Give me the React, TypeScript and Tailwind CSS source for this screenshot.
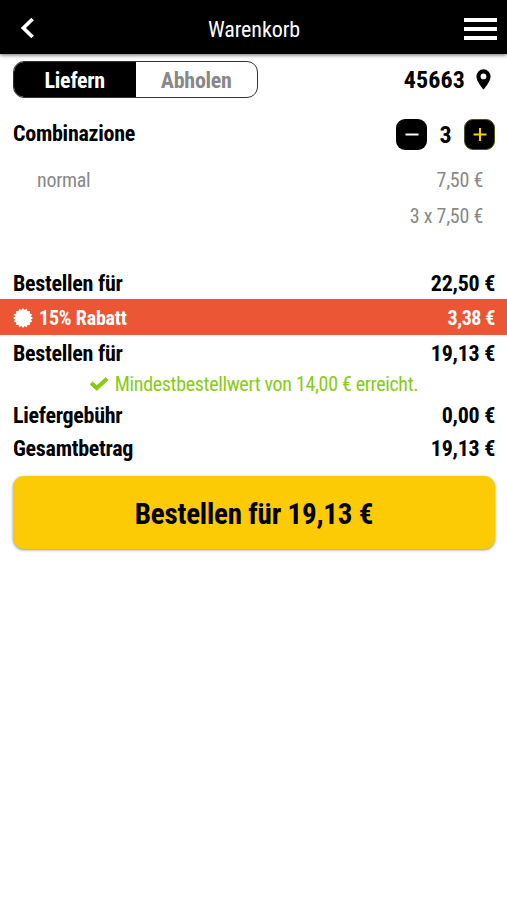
type RowProps = { label: string; price: string; className: string };

const BURST_SPIKES = 16;

// alternates between the outer and inner radius to get the spikes
const burstPoints = Array.from({ length: BURST_SPIKES * 2 }, (_, i) => {
  const radius = i % 2 === 0 ? 10 : 8.1;
  const angle = (Math.PI * i) / BURST_SPIKES;
  const x = 10 + radius * Math.sin(angle);
  const y = 10 - radius * Math.cos(angle);
  return `${x.toFixed(2)},${y.toFixed(2)}`;
}).join(" ");

function BurstIcon() {
  return (
    <svg width="20" height="20" viewBox="0 0 20 20" fill="currentColor">
      <polygon points={burstPoints} />
    </svg>
  );
}

function CheckIcon() {
  return (
    <svg width="20" height="16" viewBox="0 0 20 16" fill="currentColor">
      <path
        d="M1 8.4 3.6 6l4.1 3.6L16.8 1.5l2.4 2.4L7.8 14.4z"
        stroke="currentColor"
        strokeWidth="0.8"
        strokeLinejoin="round"
      />
    </svg>
  );
}

function PinIcon() {
  return (
    <svg width="15" height="21" viewBox="0 0 15 21" fill="currentColor">
      <path
        fillRule="evenodd"
        d="M7.5 0.3A7.1 7.1 0 0 0 .4 7.4c0 5 7.1 13.2 7.1 13.2s7.1-8.2 7.1-13.2A7.1 7.1 0 0 0 7.5.3zm0 4.2a2.9 2.9 0 1 1 0 5.8 2.9 2.9 0 0 1 0-5.8z"
      />
    </svg>
  );
}

function SummaryRow({ label, price, className }: RowProps) {
  return (
    <div
      className={`flex items-center justify-between pl-[13px] pr-3 text-[22px] font-bold ${className}`}
    >
      <span>{label}</span>
      <span>{price}</span>
    </div>
  );
}

function Header() {
  return (
    <header className="flex h-[54px] items-center justify-between bg-black pl-5 pr-[10px] pt-[3px] text-white shadow-[0_1px_4px_rgba(0,0,0,0.6)]">
      <button className="w-6 pb-px" aria-label="Zurück">
        <svg width="15" height="22" viewBox="0 0 15 22" fill="none">
          <path d="M12.6 2 3.4 11l9.2 9" stroke="white" strokeWidth="3.7" />
        </svg>
      </button>
      <h1 className="pt-[2px] text-[22px] leading-none tracking-[-0.1px]">
        Warenkorb
      </h1>
      <button className="mt-px flex w-[33px] flex-col gap-[5px]" aria-label="Menü">
        <span className="h-1 w-full bg-white" />
        <span className="h-1 w-full bg-white" />
        <span className="h-1 w-full bg-white" />
      </button>
    </header>
  );
}

export default function App() {
  return (
    <div className="min-h-[900px] w-full bg-white font-['Roboto_Condensed','Roboto',sans-serif] leading-none tracking-[-0.27px] text-black [font-stretch:75%]">
      <Header />

      <div className="mt-[6px] flex h-[38px] items-center justify-between pl-[13px] pr-4 font-bold">
        <div className="flex h-[37px] w-[245px] overflow-hidden rounded-[11px] border border-[#333] text-[22px]">
          <button className="w-1/2 bg-black pt-[3px] text-white">Liefern</button>
          <button className="w-1/2 pt-[3px] text-[#888]">Abholen</button>
        </div>
        <div className="flex items-center gap-[11px] text-[24px] tracking-[0.1px]">
          <span className="pt-[2px]">45663</span>
          <PinIcon />
        </div>
      </div>

      <div className="mt-[21px] flex h-[31px] items-center justify-between pl-[13px] pr-3 font-bold">
        <h2 className="pb-px text-[22px]">Combinazione</h2>
        <div className="flex items-center">
          <button
            className="flex size-[31px] items-center justify-center rounded-[9px] bg-black"
            aria-label="Weniger"
          >
            <svg width="14" height="14" viewBox="0 0 14 14">
              <path d="M0.5 6.5h13" stroke="white" strokeWidth="2" />
            </svg>
          </button>
          <span className="w-[37px] text-center text-[24px]">3</span>
          <button
            className="flex size-[31px] items-center justify-center rounded-[9px] border border-[#55510f] bg-black"
            aria-label="Mehr"
          >
            <svg width="14" height="14" viewBox="0 0 14 14">
              <path d="M0.5 6.5h13M7 0v13" stroke="#fccb05" strokeWidth="2" />
            </svg>
          </button>
        </div>
      </div>

      <div className="mt-3 flex h-9 items-center justify-between pl-[37px] pr-6 text-[20px] text-[#888]">
        <span>normal</span>
        <span>7,50 €</span>
      </div>
      <div className="flex h-[35px] items-center justify-end pr-6 text-[20px] text-[#888]">
        3 x 7,50 €
      </div>

      <SummaryRow className="mt-[34px] h-8 pt-[2px]" label="Bestellen für" price="22,50 €" />
      <div className="flex h-9 items-center justify-between bg-[#eb5634] pl-[13px] pr-3 pt-px text-[20px] font-bold text-white">
        <span className="flex items-center gap-[6px] tracking-[-0.2px]">
          <BurstIcon />
          15% Rabatt
        </span>
        <span className="tracking-[-0.4px]">3,38 €</span>
      </div>
      <SummaryRow className="h-9 pt-[2px]" label="Bestellen für" price="19,13 €" />
      <p className="flex h-[26px] items-center justify-center gap-[6px] text-[20px] tracking-[-0.33px] text-[#87cb16]">
        <CheckIcon />
        Mindestbestellwert von 14,00 € erreicht.
      </p>
      <SummaryRow className="h-[37px]" label="Liefergebühr" price="0,00 €" />
      <SummaryRow className="h-[30px]" label="Gesamtbetrag" price="19,13 €" />

      <div className="mt-3 pl-[13px] pr-3">
        <button className="h-[73px] w-full rounded-[11px] bg-[#fccb05] pt-[3px] text-[29px] font-bold tracking-[-0.2px] shadow-[0_1px_3px_rgba(0,0,0,0.45)]">
          Bestellen für 19,13 €
        </button>
      </div>
    </div>
  );
}
